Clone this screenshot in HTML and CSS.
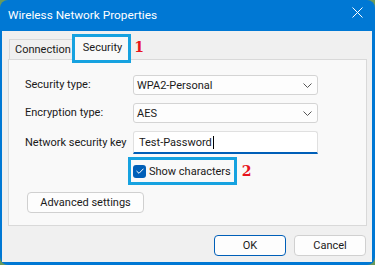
FILE: index.html
```html
<!DOCTYPE html>
<html>
<head>
    <title>Wireless Network Properties</title>
    <link rel="stylesheet" href="styles.css">
</head>
<body>
    <div class="window">
        <div class="titlebar">
            <span class="title">Wireless Network Properties</span>
            <svg class="close" width="11" height="11" viewBox="0 0 11 11">
                <path d="M0.5 0.5 L10.5 10.5 M10.5 0.5 L0.5 10.5" stroke="#fff" stroke-width="1" fill="none"/>
            </svg>
        </div>
        <div class="content">
            <div class="tabs">
                <div class="tab">Connection</div>
                <div class="tab tab-active">Security</div>
                <span class="step">1</span>
            </div>
            <div class="panel">
                <div class="form">
                    <label class="label">Security type:</label>
                    <div class="combo">
                        <span>WPA2-Personal</span>
                        <svg class="chevron" width="9" height="5" viewBox="0 0 9 5"><path d="M0.5 0.5 L4.5 4.5 L8.5 0.5" stroke="#555" fill="none"/></svg>
                    </div>
                    <label class="label">Encryption type:</label>
                    <div class="combo">
                        <span>AES</span>
                        <svg class="chevron" width="9" height="5" viewBox="0 0 9 5"><path d="M0.5 0.5 L4.5 4.5 L8.5 0.5" stroke="#555" fill="none"/></svg>
                    </div>
                    <label class="label">Network security key</label>
                    <div class="textbox"><span>Test-Password</span><span class="caret"></span></div>
                </div>
                <div class="show-row">
                    <div class="highlight">
                        <span class="checkbox">
                            <svg width="8" height="6" viewBox="0 0 8 6"><path d="M0.5 3 L3 5.3 L7.5 0.7" stroke="#fff" stroke-width="1" fill="none"/></svg>
                        </span>
                        <span>Show characters</span>
                    </div>
                    <span class="step">2</span>
                </div>
                <button class="btn btn-advanced">Advanced settings</button>
            </div>
            <div class="footer">
                <button class="btn btn-default">OK</button>
                <button class="btn">Cancel</button>
            </div>
        </div>
    </div>
</body>
</html>
```

FILE: styles.css
```css
body, html {
    margin: 0;
    padding: 0;
    background-color: #6a9a5a;
    font-family: Roboto, "Noto Sans", Arial, sans-serif;
    font-size: 11px;
    color: #1a1a1a;
    white-space: nowrap;
}

.window {
    width: 375px;
    height: 265px;
    box-sizing: border-box;
    display: flex;
    flex-direction: column;
    background-color: #0078d4;
    border-radius: 8px;
    overflow: hidden;
    padding: 0 3px 3px 2px;
}

.titlebar {
    height: 31px;
    display: flex;
    align-items: center;
    justify-content: space-between;
    padding: 0 9px 0 6px;
    color: white;
    flex-shrink: 0;
}

.title {
    font-size: 11.8px;
    margin-top: -2px;
}

.close {
    margin-top: -6px;
}

.content {
    flex: 1;
    background-color: #f0f0f0;
    padding: 0 5px 0 6px;
    display: flex;
    flex-direction: column;
}

.tabs {
    height: 28px;
    display: flex;
    align-items: flex-end;
    padding-left: 1px;
}

.tab {
    height: 19px;
    line-height: 20px;
    padding: 0 2px 0 5px;
    border: 1px solid #d9d9d9;
    border-bottom: none;
    background-color: #f0f0f0;
}

.tab-active {
    height: 24px;
    line-height: 22px;
    padding: 0 6px 0 8px;
    background-color: #f9f9f9;
    border-color: #d9d9d9;
    outline: 3px solid #16a2e0;
    outline-offset: -1px;
    position: relative;
    top: 2px;
    margin-left: 0;
}

.step {
    color: #e8141c;
    font-family: "DejaVu Serif", "Liberation Serif", serif;
    font-weight: bold;
    font-size: 14px;
    line-height: 14px;
    margin-left: 5px;
    align-self: center;
    margin-top: 4px;
}

.panel {
    height: 167px;
    box-sizing: border-box;
    border: 1px solid #d9d9d9;
    background-color: #f9f9f9;
    padding: 15px 0 0 16px;
}

.form {
    display: grid;
    grid-template-columns: 108px 185px;
    grid-template-rows: 20px 20px 23px;
    row-gap: 8px;
    align-items: center;
}

.label {
    padding-bottom: 1px;
}

.combo {
    height: 20px;
    box-sizing: border-box;
    border: 1px solid #d4d4d4;
    border-radius: 3px;
    background-color: #fdfdfd;
    display: flex;
    align-items: center;
    justify-content: space-between;
    padding: 0 5px 0 3px;
}

.textbox {
    height: 23px;
    box-sizing: border-box;
    border: 1px solid #e0e0e0;
    border-bottom: 2px solid #005fb8;
    border-radius: 3px 3px 0 0;
    background-color: #fff;
    display: flex;
    align-items: center;
    padding: 0 5px;
}

.caret {
    width: 1px;
    height: 13px;
    background-color: #000;
    margin-left: 1px;
}

.show-row {
    display: flex;
    align-items: center;
    margin-top: 3px;
    padding-left: 103px;
}

.highlight {
    display: flex;
    align-items: center;
    height: 22px;
    border: 3px solid #16a2e0;
    padding: 0 3px 0 2px;
    gap: 3px;
}

.checkbox {
    width: 13px;
    height: 13px;
    box-sizing: border-box;
    background-color: #005fb8;
    border-radius: 3px;
    display: flex;
    align-items: center;
    justify-content: center;
}

.show-row .step {
    margin-top: 0;
    margin-left: 5px;
}

.btn {
    font-family: inherit;
    font-size: 11px;
    color: #1a1a1a;
    background-color: #fdfdfd;
    border: 1px solid #d0d0d0;
    border-radius: 4px;
    height: 21px;
    padding: 0;
}

.btn-advanced {
    width: 117px;
    margin-top: 7px;
    margin-left: 2px;
}

.footer {
    display: flex;
    justify-content: flex-end;
    gap: 8px;
    padding-top: 9px;
    padding-right: 1px;
}

.footer .btn {
    width: 72px;
    height: 21px;
}

.btn-default {
    border-color: #005fb8;
}
```
